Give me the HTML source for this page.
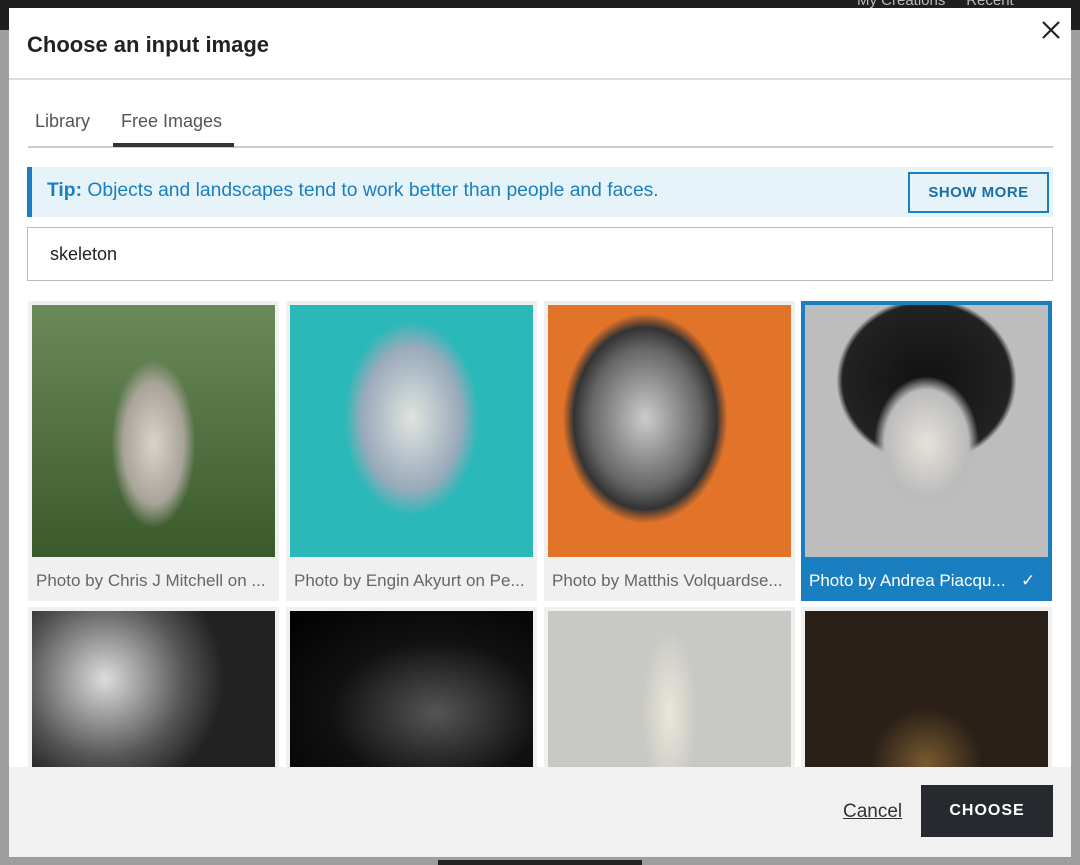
<!DOCTYPE html>
<html><head><meta charset="utf-8"><style>
*{box-sizing:border-box;margin:0;padding:0}
body{width:1080px;height:865px;background:#9e9e9e;font-family:"Liberation Sans",sans-serif;position:relative;overflow:hidden}
.top{position:absolute;left:0;top:0;width:1080px;height:30px;background:#1f1f1f;color:#bbb;font-size:15px}
.modal{position:absolute;left:9px;top:8px;width:1062px;height:849px;background:#fff;overflow:hidden}
h1{position:absolute;left:18px;top:24px;font-size:22px;font-weight:bold;color:#222}
.x{position:absolute;right:11px;top:13px}
.hr{position:absolute;left:0;top:70px;width:100%;height:2px;background:#ddd}
.tabs{position:absolute;left:19px;top:138px;width:1025px;height:2px;background:#ccc}
.tab{position:absolute;top:103px;font-size:18px;color:#555}
.ul{position:absolute;left:104px;top:135px;width:121px;height:4px;background:#333}
.tip{position:absolute;left:18px;top:159px;width:1026px;height:50px;background:#e6f3f8;border-left:5px solid #1a7fc1;color:#1a7fc1;font-size:19.3px;padding:13px 15px}
.sm{position:absolute;right:4px;top:5px;width:141px;height:41px;border:2px solid #1a7fc1;font-size:15px;font-weight:bold;text-align:center;line-height:37px;color:#1a6fa8;letter-spacing:.5px}
.inp{position:absolute;left:18px;top:219px;width:1026px;height:54px;border:1px solid #bbb;font-size:18px;padding:16px 22px;color:#222}
.t{position:absolute;width:251px;background:#f0f0f0}
.t .im{position:absolute;left:4px;top:4px;width:243px}
.t .cap{position:absolute;left:8px;top:270px;font-size:17px;color:#666;white-space:nowrap}
.sel{background:#1a7fc1}.sel .cap{color:#fff}
.foot{position:absolute;left:0;top:759px;width:100%;height:90px;background:#f1f1f1}
.cancel{position:absolute;left:834px;top:34px;font-size:19px;color:#333;text-decoration:underline}
.ch{position:absolute;left:912px;top:18px;width:132px;height:52px;background:#262a2e;color:#fff;font-weight:bold;font-size:16px;text-align:center;line-height:52px;letter-spacing:1px}
</style></head><body>
<div class="top"><span style="position:absolute;left:857px;top:-8px">My Creations &nbsp;&nbsp;&nbsp; Recent</span></div>
<div class="modal">
<h1>Choose an input image</h1><div class="x"><svg width="18" height="18" viewBox="0 0 18 18"><path d="M1 1L17 17M17 1L1 17" stroke="#222" stroke-width="2.2"/></svg></div>
<div class="hr"></div>
<div class="tab" style="left:26px">Library</div><div class="tab" style="left:112px">Free Images</div>
<div class="tabs"></div><div class="ul"></div>
<div class="tip"><b>Tip:</b> Objects and landscapes tend to work better than people and faces.<div class="sm">SHOW MORE</div></div>
<div class="inp">skeleton</div>
<div class="t" style="left:19px;top:293px;height:300px"><div class="im" style="height:252px;background:radial-gradient(ellipse 60px 120px at 50% 55%,#d8d4cc,#a9a49a 50%,transparent 70%),linear-gradient(#6a8a5a,#3b5a2c)"></div><div class="cap">Photo by Chris J Mitchell on ...</div></div>
<div class="t" style="left:277px;top:293px;height:300px"><div class="im" style="height:252px;background:radial-gradient(ellipse 90px 130px at 50% 45%,#e0e4de,#9ab 55%,transparent 75%),#2ab8b8"></div><div class="cap">Photo by Engin Akyurt on Pe...</div></div>
<div class="t" style="left:535px;top:293px;height:300px"><div class="im" style="height:252px;background:radial-gradient(ellipse 110px 140px at 40% 45%,#ccc,#666 50%,#333 65%,transparent 75%),#e2742a"></div><div class="cap">Photo by Matthis Volquardse...</div></div>
<div class="t sel" style="left:792px;top:293px;height:300px"><div class="im" style="height:252px;background:radial-gradient(ellipse 70px 90px at 50% 55%,#e6e2da,#bbb 60%,transparent 75%),radial-gradient(ellipse 120px 110px at 50% 30%,#111,#222 70%,transparent 75%),#bdbdbd"></div><div class="cap">Photo by Andrea Piacqu... <span style="position:absolute;left:212px">✓</span></div></div>
<div class="t" style="left:19px;top:599px;height:170px"><div class="im" style="height:170px;background:radial-gradient(circle at 30% 40%,#ddd,#555 40%,#222 60%),#333"></div></div>
<div class="t" style="left:277px;top:599px;height:170px"><div class="im" style="height:170px;background:radial-gradient(ellipse at 60% 60%,#555,#111 50%,#000)"></div></div>
<div class="t" style="left:535px;top:599px;height:170px"><div class="im" style="height:170px;background:radial-gradient(ellipse 40px 120px at 50% 60%,#ebe6da,#c8c8c4 70%),#c3c6c8"></div></div>
<div class="t" style="left:792px;top:599px;height:170px"><div class="im" style="height:170px;background:radial-gradient(ellipse 80px 80px at 50% 90%,#7a5a30,#2a2018 70%),#1e1a18"></div></div>
<div class="foot"><div class="cancel">Cancel</div><div class="ch">CHOOSE</div></div>
</div>
<div style="position:absolute;left:438px;top:860px;width:204px;height:5px;background:#222"></div>
</body></html>
